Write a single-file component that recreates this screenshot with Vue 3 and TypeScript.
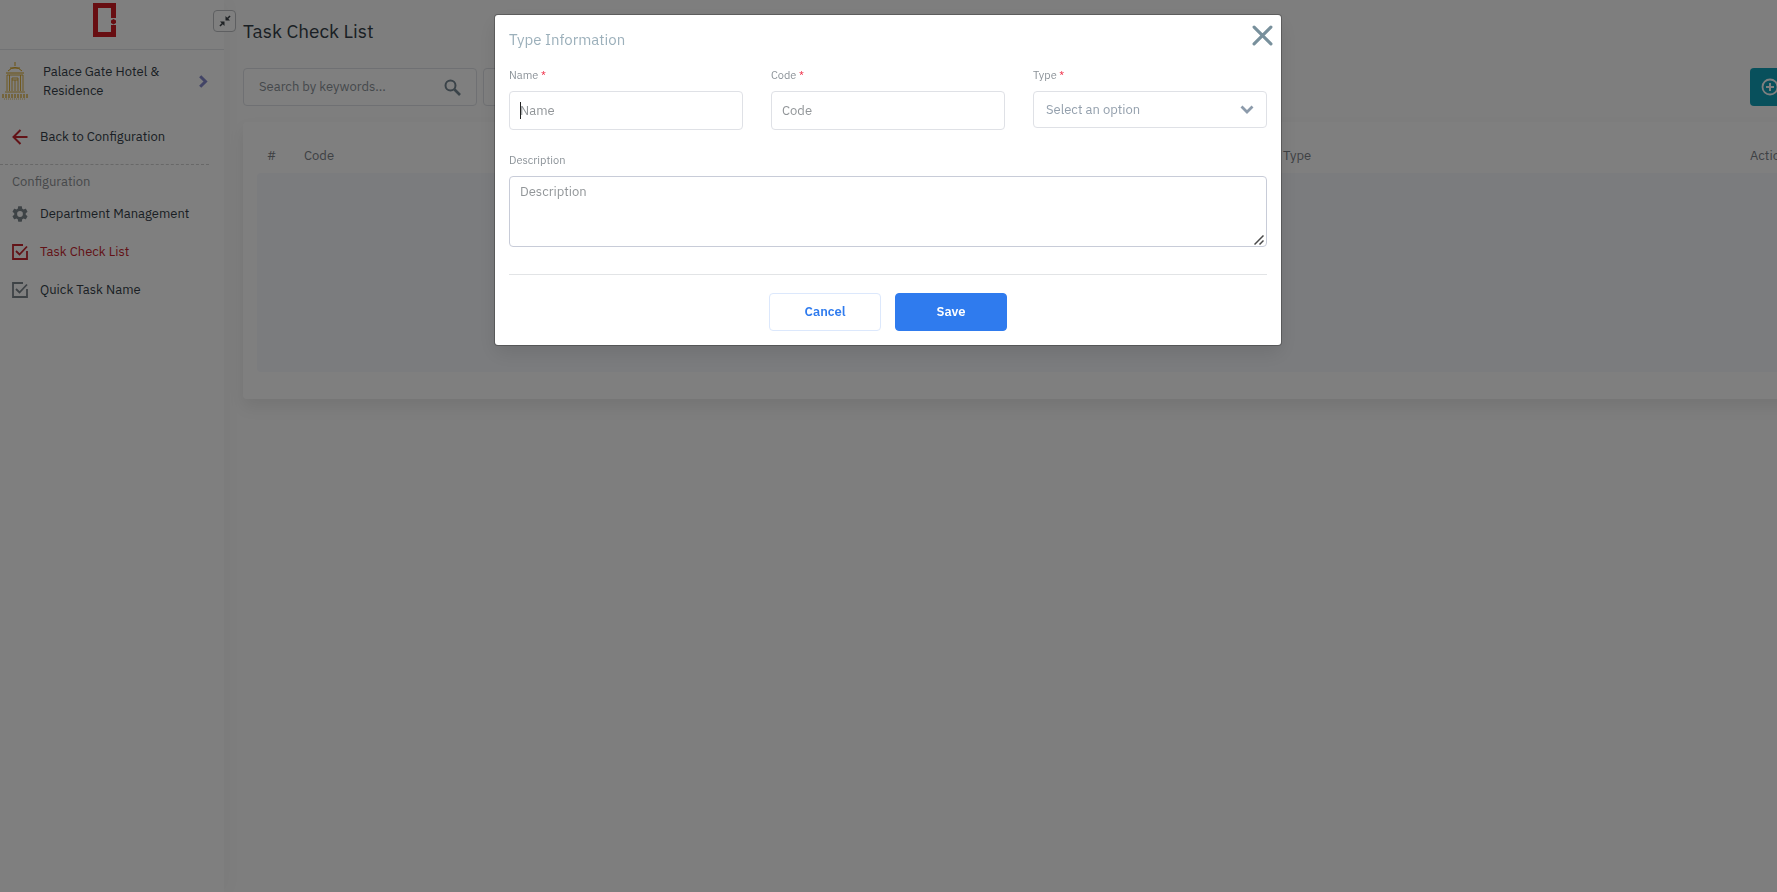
<script setup lang="ts">
import { ref } from 'vue'

interface NavItem {
  label: string
  icon: 'gear' | 'check'
  active: boolean
}

const navItems: NavItem[] = [
  { label: 'Department Management', icon: 'gear', active: false },
  { label: 'Task Check List', icon: 'check', active: true },
  { label: 'Quick Task Name', icon: 'check', active: false },
]

const modalOpen = ref(true)
const keyword = ref('')
const name = ref('')
const code = ref('')
const type = ref('')
const description = ref('')

function closeModal(): void {
  modalOpen.value = false
}
</script>

<template>
  <div class="app">
    <aside class="sidebar">
      <div class="brand">
        <svg class="brand-logo" viewBox="0 0 23 34" aria-hidden="true">
          <path d="M0 0H23V15H18V5H5V29H18V22H23V34H0Z" fill="#d01c24" />
          <path d="M20.500 16L23 17.500V20L20.500 21.500L18 20V17.500Z" fill="#d01c24" />
        </svg>
      </div>
      <button class="hotel" type="button">
        <svg class="hotel-logo" viewBox="0 0 28 38" aria-hidden="true" fill="none" stroke="#d9a520">
          <path d="M14 0V4M9 6H19M7 9Q14 2 21 9M5 11H23" />
          <path d="M6 13H22M6 13V29M8.500 13V29M19.500 13V29M22 13V29M11 29V16H17V29M14 18V29M11 18H17M4 30H24" opacity="0.850" />
          <path d="M1 34H27" stroke-width="4" stroke-dasharray="2 1" opacity="0.600" />
          <path d="M3 37H25" stroke-dasharray="1 1" opacity="0.700" />
        </svg>
        <span class="hotel-name">Palace Gate Hotel &amp; Residence</span>
        <svg class="hotel-arrow" viewBox="0 0 9 13" aria-hidden="true">
          <path d="M1.200 1.200L6.500 6.500L1.200 11.800" fill="none" stroke="#8488cc" stroke-width="3" />
        </svg>
      </button>
      <a class="nav-link back" href="#configuration">
        <svg class="nav-icon" viewBox="0 0 16 16" aria-hidden="true">
          <path d="M15.500 8H1.500M8.500 1L1.500 8L8.500 15" fill="none" stroke="#c6262e" stroke-width="2" />
        </svg>
        <span>Back to Configuration</span>
      </a>
      <nav class="nav">
        <h2 class="nav-title">Configuration</h2>
        <a
          v-for="item in navItems"
          :key="item.label"
          class="nav-link"
          :class="{ active: item.active }"
          href="#"
        >
          <svg v-if="item.icon === 'gear'" class="nav-icon" viewBox="2 2 20 20" aria-hidden="true">
            <path
              fill="currentColor"
              d="M19.140 12.940c.04-.3.06-.61.06-.94s-.02-.64-.07-.94l2.030-1.580c.18-.14.23-.41.12-.61l-1.920-3.320c-.12-.22-.37-.29-.59-.22l-2.390.96c-.5-.38-1.030-.7-1.620-.94l-.36-2.540c-.04-.24-.24-.41-.48-.41h-3.840c-.24 0-.43.17-.47.41l-.36 2.540c-.59.24-1.130.57-1.620.94l-2.390-.96c-.22-.08-.47 0-.59.22L2.740 8.870c-.12.21-.08.47.12.61l2.030 1.580c-.05.3-.09.63-.09.94s.02.64.07.94l-2.030 1.580c-.18.14-.23.41-.12.61l1.920 3.320c.12.22.37.29.59.22l2.390-.96c.5.38 1.030.7 1.620.94l.36 2.540c.05.24.24.41.48.41h3.840c.24 0 .44-.17.47-.41l.36-2.540c.59-.24 1.130-.56 1.620-.94l2.390.96c.22.08.47 0 .59-.22l1.920-3.320c.12-.22.07-.47-.12-.61l-2.010-1.580zM12 15.600a3.600 3.600 0 1 1 0-7.200 3.600 3.600 0 0 1 0 7.200z"
            />
          </svg>
          <svg v-else class="nav-icon" viewBox="0 0 16 16" aria-hidden="true">
            <path
              fill="none"
              stroke="currentColor"
              stroke-width="1.800"
              d="M11 1H1V15H15V7M4 7L7.500 10.500L15 2.500"
            />
          </svg>
          <span>{{ item.label }}</span>
        </a>
      </nav>
      <button class="collapse" type="button" aria-label="Collapse sidebar">
        <svg viewBox="0 0 12 12" aria-hidden="true">
          <path
            d="M6.500 5.500V1L8.200 2.700L10.500 .4L11.600 1.500L9.300 3.800L11 5.500ZM5.500 6.500V11L3.800 9.300L1.500 11.600L.4 10.500L2.700 8.200L1 6.500Z"
            fill="#3c4248"
          />
        </svg>
      </button>
    </aside>

    <main class="main">
      <div class="content">
        <h1 class="page-title">Task Check List</h1>
        <div class="toolbar">
          <label class="search">
            <input v-model="keyword" type="text" placeholder="Search by keywords..." aria-label="Search by keywords" />
            <svg viewBox="0 0 17 17" aria-hidden="true">
              <circle cx="6.500" cy="6.500" r="5" fill="none" stroke="#758692" stroke-width="2" />
              <path d="M10.500 10.500L16 16" stroke="#758692" stroke-width="2.600" />
            </svg>
          </label>
          <select class="filter" aria-label="Filter"></select>
          <button class="add" type="button" aria-label="Add">
            <svg viewBox="0 0 18 18" aria-hidden="true">
              <path d="M9 5V13M5 9H13" stroke="#fff" stroke-width="2" />
              <circle cx="9" cy="9" r="7.500" fill="none" stroke="#fff" stroke-width="1.800" />
            </svg>
          </button>
        </div>
        <section class="card">
          <table class="tasks">
            <colgroup>
              <col class="col-index" />
              <col />
              <col class="col-type" />
              <col class="col-actions" />
            </colgroup>
            <thead>
              <tr>
                <th>#</th>
                <th>Code</th>
                <th>Type</th>
                <th>Actions</th>
              </tr>
            </thead>
            <tbody>
              <tr>
                <td class="empty" colspan="4"></td>
              </tr>
            </tbody>
          </table>
        </section>
      </div>
    </main>

    <div v-if="modalOpen" class="overlay">
      <form class="modal" role="dialog" aria-labelledby="modal-title" @submit.prevent="closeModal">
        <header class="modal-head">
          <h2 id="modal-title">Type Information</h2>
          <button class="close" type="button" aria-label="Close" @click="closeModal">
            <svg viewBox="0 0 20 20" aria-hidden="true">
              <path d="M2 2L18 18M18 2L2 18" stroke="#78909c" stroke-width="3" stroke-linecap="round" />
            </svg>
          </button>
        </header>
        <div class="fields">
          <div class="field">
            <label for="name">Name <span class="required">*</span></label>
            <div class="text-box">
              <input id="name" v-model="name" type="text" placeholder="Name" />
              <span class="caret"></span>
            </div>
          </div>
          <div class="field">
            <label for="code">Code <span class="required">*</span></label>
            <div class="text-box">
              <input id="code" v-model="code" type="text" placeholder="Code" />
            </div>
          </div>
          <div class="field">
            <label for="type">Type <span class="required">*</span></label>
            <div class="select-box">
              <select id="type" v-model="type">
                <option value="">Select an option</option>
              </select>
              <svg viewBox="0 0 14 9" aria-hidden="true">
                <path d="M1.500 1.500L7 7L12.500 1.500" fill="none" stroke="#8c9bab" stroke-width="2.800" />
              </svg>
            </div>
          </div>
        </div>
        <div class="field description">
          <label for="description">Description</label>
          <div class="text-area">
            <textarea id="description" v-model="description" placeholder="Description"></textarea>
            <svg class="grip" viewBox="0 0 10 10" aria-hidden="true">
              <path d="M.5 9.500L9.500 .5M5.500 9.500L9.500 5.500" stroke="#4a4a4a" stroke-width="1.500" />
            </svg>
          </div>
        </div>
        <footer class="actions">
          <button class="btn cancel" type="button" @click="closeModal">Cancel</button>
          <button class="btn save" type="submit">Save</button>
        </footer>
      </form>
    </div>
  </div>
</template>

<style>
body {
  margin: 0;
  background: #fcfcfc;
}
</style>

<style scoped>
* {
  box-sizing: border-box;
}

.app {
  display: flex;
  min-height: 100vh;
  overflow: hidden;
  font-family: 'IBM Plex Sans', Roboto, 'Liberation Sans', sans-serif;
  font-size: 13px;
  line-height: 20px;
  color: #353f48;
}

button,
input,
select,
textarea {
  font: inherit;
  color: inherit;
}

h1,
h2 {
  margin: 0;
  font-weight: 400;
}

.sidebar {
  position: relative;
  flex: 0 0 224px;
  background: #fff;
  box-shadow: 0 0 20px rgba(0, 0, 0, 0.04);
}

.brand {
  display: flex;
  justify-content: center;
  height: 50px;
  padding: 3px 15px 0 0;
  border-bottom: 1px solid #e2e4e8;
}

.brand-logo {
  width: 23px;
  height: 34px;
}

.hotel {
  display: flex;
  align-items: center;
  width: 100%;
  height: 62px;
  padding: 0 16px 0 1px;
  border: 0;
  background: none;
  text-align: left;
}

.hotel-logo {
  width: 28px;
  height: 38px;
}

.hotel-name {
  flex: 1;
  padding: 0 32px 0 14px;
  line-height: 19px;
}

.hotel-arrow {
  width: 9px;
  height: 13px;
}

.nav-link {
  display: flex;
  align-items: center;
  gap: 12px;
  height: 38px;
  padding: 0 12px;
  color: #353f48;
  text-decoration: none;
  white-space: nowrap;
}

.nav-icon {
  flex: none;
  width: 16px;
  height: 16px;
  color: #7d868d;
}

.active,
.active .nav-icon {
  color: #c6262e;
}

.back {
  margin: 6px 0 8px;
}

.nav {
  margin-right: 15px;
  border-top: 1px dashed #d0d0d0;
}

.nav-title {
  padding: 7px 12px 3px;
  font-size: 13px;
  line-height: 20px;
  color: #8e9296;
}

.collapse {
  position: absolute;
  top: 10px;
  right: -12px;
  display: flex;
  align-items: center;
  justify-content: center;
  width: 23px;
  height: 22px;
  padding: 0;
  border: 1px solid #bcbec2;
  border-radius: 4px;
  background: #fff;
}

.collapse svg {
  width: 12px;
  height: 12px;
}

.main {
  flex: 1;
  min-width: 0;
  padding-left: 19px;
}

.content {
  width: calc(100% + 85px);
}

.page-title {
  padding: 18px 0;
  font-size: 19px;
  line-height: 26px;
}

.toolbar {
  display: flex;
  gap: 6px;
  margin-top: 6px;
  height: 38px;
}

.search {
  display: flex;
  align-items: center;
  width: 234px;
  padding: 0 15px;
  border: 1px solid #dfe1e6;
  border-radius: 4px;
  background: #fff;
}

.search input {
  flex: 1;
  min-width: 0;
  padding: 0;
  border: 0;
  outline: 0;
  background: none;
}

.search input::placeholder {
  color: #8b9298;
}

.search svg {
  width: 17px;
  height: 17px;
}

.filter {
  width: 160px;
  border: 1px solid #dfe1e6;
  border-radius: 4px;
  background: #fff;
  appearance: none;
}

.add {
  display: flex;
  align-items: center;
  width: 112px;
  margin-left: auto;
  padding: 0 11px;
  border: 0;
  border-radius: 4px;
  background: #11a0b8;
}

.add svg {
  width: 18px;
  height: 18px;
}

.card {
  margin-top: 16px;
  padding: 14px 14px 27px;
  border-radius: 4px;
  background: #fff;
  box-shadow: 0 8px 16px rgba(0, 0, 0, 0.08);
}

.tasks {
  width: 100%;
  table-layout: fixed;
  border-collapse: collapse;
}

.col-index {
  width: 37px;
}

.col-type {
  width: 467px;
}

.col-actions {
  width: 108px;
}

.tasks th {
  height: 37px;
  padding: 2px 10px 0;
  font-weight: 400;
  text-align: left;
  color: #7c8288;
}

.tasks .empty {
  height: 199px;
  padding: 0;
  border-radius: 4px;
  background: #f6f8fc;
}

.overlay {
  position: fixed;
  inset: 0;
  display: flex;
  align-items: flex-start;
  justify-content: center;
  padding: 15px 15px 15px 14px;
  background: rgba(0, 0, 0, 0.5);
}

.modal {
  width: 100%;
  max-width: 786px;
  padding: 14px;
  border-radius: 3px;
  background: #fff;
  box-shadow: 0 0 0 1px rgba(0, 0, 0, 0.25), 0 8px 20px rgba(0, 0, 0, 0.1);
}

.modal-head {
  position: relative;
}

.modal-head h2 {
  font-size: 15px;
  line-height: 22px;
  color: #9cb0bb;
}

.close {
  position: absolute;
  top: -4px;
  right: -6px;
  display: flex;
  padding: 0;
  border: 0;
  background: none;
}

.close svg {
  width: 21px;
  height: 21px;
}

.fields {
  display: grid;
  grid-template-columns: repeat(3, 1fr);
  align-items: start;
  gap: 28px;
  margin-top: 16px;
}

.field label {
  display: block;
  margin-bottom: 8px;
  font-size: 11px;
  line-height: 16px;
  color: #8b9298;
}

.required {
  color: #f0324b;
}

.text-box,
.select-box,
.text-area {
  position: relative;
}

.text-box input {
  display: block;
  width: 100%;
  height: 39px;
  padding: 0 10px;
  border: 1px solid #dfe1e6;
  border-radius: 4px;
  outline: 0;
}

.text-box input::placeholder,
textarea::placeholder {
  color: #929699;
}

.caret {
  position: absolute;
  top: 11px;
  left: 11px;
  width: 1px;
  height: 17px;
  background: #222;
}

.select-box select {
  display: block;
  width: 100%;
  height: 37px;
  padding: 0 12px;
  border: 1px solid #dfe1e6;
  border-radius: 4px;
  background: #fff;
  color: #94a0ad;
  appearance: none;
}

.select-box svg {
  position: absolute;
  top: 14px;
  right: 13px;
  width: 14px;
  height: 9px;
  pointer-events: none;
}

.description {
  margin-top: 22px;
}

textarea {
  display: block;
  width: 100%;
  height: 71px;
  padding: 5px 10px;
  border: 1px solid #c8ccd8;
  border-radius: 4px;
  outline: 0;
  resize: none;
}

.grip {
  position: absolute;
  right: 3px;
  bottom: 2px;
  width: 10px;
  height: 10px;
  pointer-events: none;
}

.actions {
  display: flex;
  justify-content: center;
  gap: 14px;
  margin-top: 27px;
  padding-top: 18px;
  border-top: 1px solid #e2e4e6;
}

.btn {
  width: 112px;
  height: 38px;
  border: 1px solid #2f7bee;
  border-radius: 4px;
  font-weight: 600;
}

.cancel {
  border-color: #dce8fc;
  background: #fff;
  color: #2f7bee;
}

.save {
  background: #2f7bee;
  color: #fff;
}
</style>
